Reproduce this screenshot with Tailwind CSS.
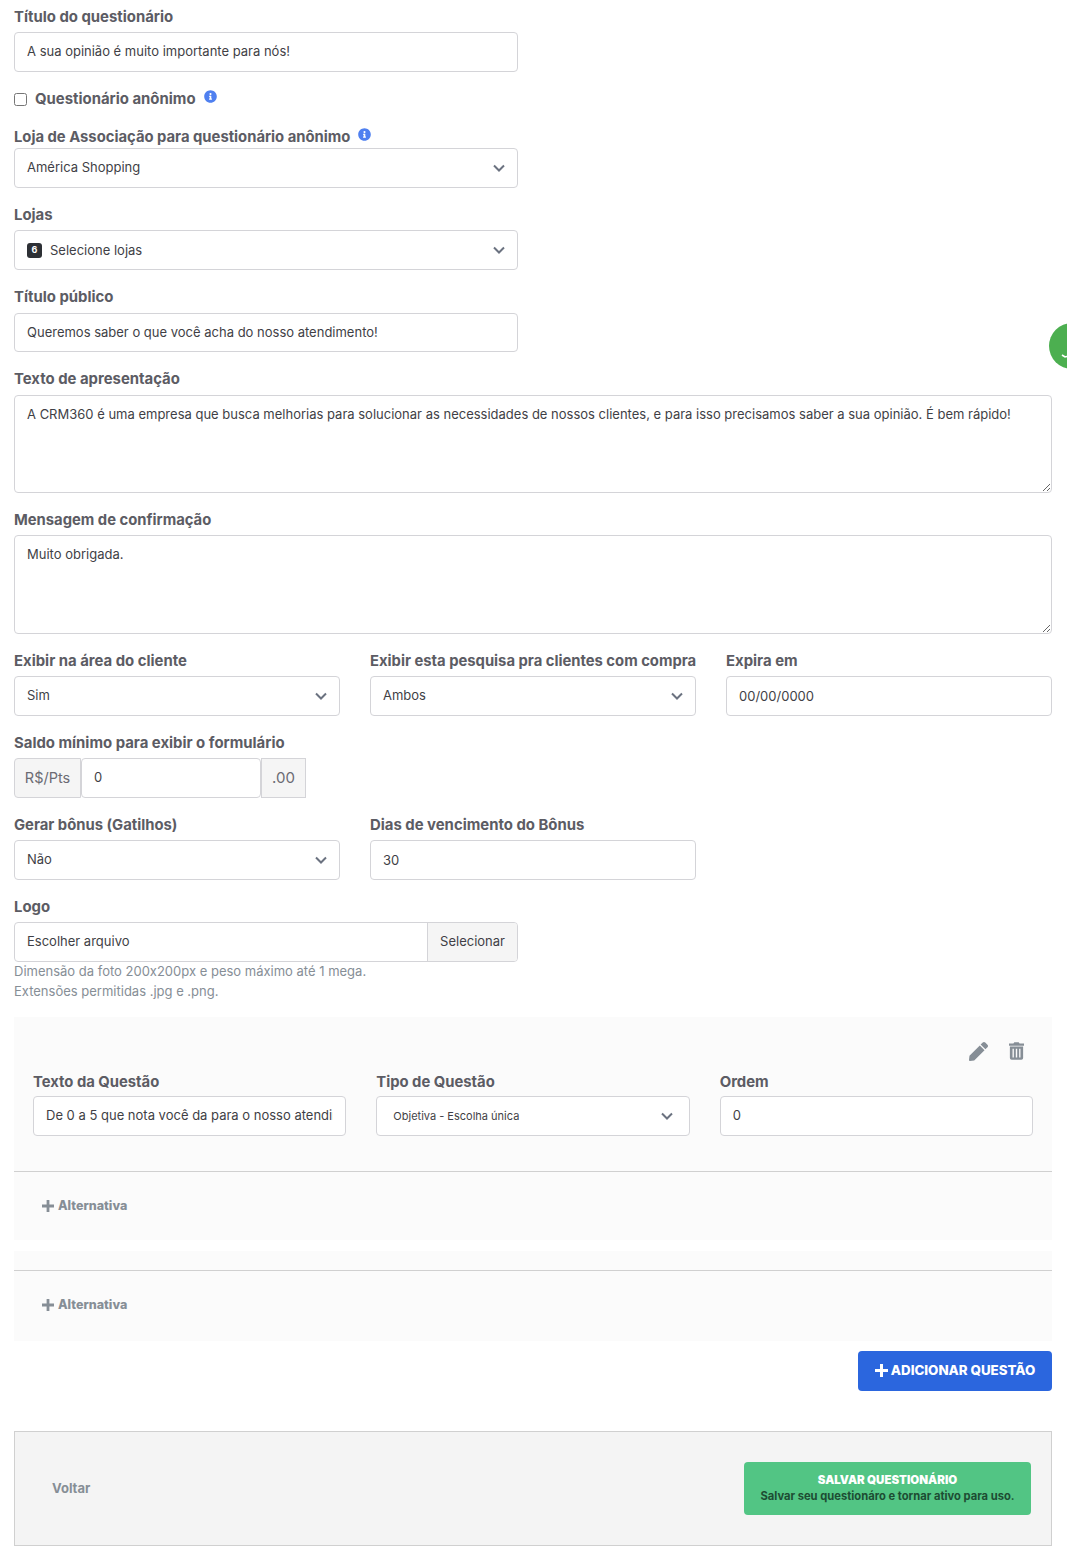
<!DOCTYPE html>
<html lang="pt-BR">
<head>
  <meta charset="utf-8" />
  <title>Questionário</title>
  <script src="https://cdn.jsdelivr.net/npm/@tailwindcss/browser@4"></script>
</head>
<body class="bg-white font-['Inter',sans-serif] text-[13px] text-[#3f3f46] overflow-x-hidden [font-variant-ligatures:none] [font-feature-settings:'calt'_0]">
  <!-- floating whatsapp bubble, cut off by the window -->
  <div class="fixed left-[1049px] top-[323px] w-[46px] h-[46px] rounded-full bg-[#4caf50] overflow-hidden">
    <svg class="absolute left-[12px] top-[26px]" width="12" height="10" viewBox="0 0 12 10" fill="none" stroke="#fff" stroke-width="1.6"><path d="M1 6l3 2 4-1" /></svg>
  </div>

  <form class="w-[1038px] ml-[14px] pt-[5px] h-[1557px]">
    <label class="block h-6 leading-6 mb-[3px] text-[14.9px] font-bold text-[#5c5c64]">Título do questionário</label>
    <input value="A sua opinião é muito importante para nós!" class="block w-[504px] h-10 px-3 pb-[2px] border border-[#d4d4d8] rounded" />

    <div class="flex items-center h-6 pt-[2px] mt-[14px]">
      <input type="checkbox" class="w-[13px] h-[13px]" />
      <span class="ml-2 text-[14.9px] font-bold text-[#5c5c64]">Questionário anônimo</span>
      <svg class="ml-2 mb-[6px]" width="13" height="13" viewBox="0 0 512 512" fill="#4f80f0"><path d="M256 8C119 8 8 119 8 256s111 248 248 248 248-111 248-248S393 8 256 8zm0 110a42 42 0 1 1 0 84 42 42 0 0 1 0-84zm56 254c0 7-5 12-12 12h-88c-7 0-12-5-12-12v-24c0-7 5-12 12-12h12v-64h-12c-7 0-12-5-12-12v-24c0-7 5-12 12-12h64c7 0 12 5 12 12v100h12c7 0 12 5 12 12v24z"/></svg>
    </div>

    <div class="flex items-center h-6 pt-[2px] mt-[14px]">
      <label class="text-[14.8px] font-bold text-[#5c5c64]">Loja de Associação para questionário anônimo</label>
      <svg class="ml-2 mb-[6px]" width="13" height="13" viewBox="0 0 512 512" fill="#4f80f0"><path d="M256 8C119 8 8 119 8 256s111 248 248 248 248-111 248-248S393 8 256 8zm0 110a42 42 0 1 1 0 84 42 42 0 0 1 0-84zm56 254c0 7-5 12-12 12h-88c-7 0-12-5-12-12v-24c0-7 5-12 12-12h12v-64h-12c-7 0-12-5-12-12v-24c0-7 5-12 12-12h64c7 0 12 5 12 12v100h12c7 0 12 5 12 12v24z"/></svg>
    </div>
    <div class="flex items-center justify-between w-[504px] h-10 pl-3 pr-[11px] border border-[#d4d4d8] rounded">
      <span class="mb-px">América Shopping</span>
      <svg width="14" height="14" viewBox="0 0 14 14" fill="none" stroke="#6b7280" stroke-width="2"><path d="M2 4.500l5 5 5-5"/></svg>
    </div>

    <label class="block h-6 leading-6 mt-[15px] mb-[3px] text-[14.9px] font-bold text-[#5c5c64]">Lojas</label>
    <div class="flex items-center justify-between w-[504px] h-10 pl-3 pr-[11px] border border-[#d4d4d8] rounded">
      <span class="flex items-center gap-2">
        <span class="w-[15px] h-[15px] rounded-[3px] bg-[#2d3035] text-white text-[9px] font-bold flex items-center justify-center">6</span>
        <span class="mt-px">Selecione lojas</span>
      </span>
      <svg width="14" height="14" viewBox="0 0 14 14" fill="none" stroke="#6b7280" stroke-width="2"><path d="M2 4.500l5 5 5-5"/></svg>
    </div>

    <label class="block h-6 leading-6 mt-[15px] mb-1 text-[14.9px] font-bold text-[#5c5c64]">Título público</label>
    <input value="Queremos saber o que você acha do nosso atendimento!" class="block w-[504px] h-[39px] px-3 pb-[2px] border border-[#d4d4d8] rounded" />

    <label class="block h-6 leading-6 mt-[15px] mb-1 text-[14.9px] font-bold text-[#5c5c64]">Texto de apresentação</label>
    <textarea class="block w-full h-[98px] px-3 py-[9px] border border-[#d4d4d8] rounded">A CRM360 é uma empresa que busca melhorias para solucionar as necessidades de nossos clientes, e para isso precisamos saber a sua opinião. É bem rápido!</textarea>

    <label class="block h-6 leading-6 mt-[15px] mb-[3px] text-[14.8px] font-bold text-[#5c5c64]">Mensagem de confirmação</label>
    <textarea class="block w-full h-[99px] px-3 py-[9px] border border-[#d4d4d8] rounded">Muito obrigada.</textarea>

    <div class="grid grid-cols-3 gap-x-[30px] mt-[15px]">
      <div>
        <label class="block h-6 leading-6 mb-[3px] text-[14.9px] font-bold text-[#5c5c64]">Exibir na área do cliente</label>
        <div class="flex items-center justify-between h-10 pl-3 pr-[11px] border border-[#d4d4d8] rounded">
          <span>Sim</span>
          <svg width="14" height="14" viewBox="0 0 14 14" fill="none" stroke="#6b7280" stroke-width="2"><path d="M2 4.500l5 5 5-5"/></svg>
        </div>
      </div>
      <div>
        <label class="block h-6 leading-6 mb-[3px] text-[14.8px] font-bold text-[#5c5c64] whitespace-nowrap">Exibir esta pesquisa pra clientes com compra</label>
        <div class="flex items-center justify-between h-10 pl-3 pr-[11px] border border-[#d4d4d8] rounded">
          <span>Ambos</span>
          <svg width="14" height="14" viewBox="0 0 14 14" fill="none" stroke="#6b7280" stroke-width="2"><path d="M2 4.500l5 5 5-5"/></svg>
        </div>
      </div>
      <div>
        <label class="block h-6 leading-6 mb-[3px] text-[14.9px] font-bold text-[#5c5c64]">Expira em</label>
        <input value="00/00/0000" class="block w-full h-10 px-3 border border-[#d4d4d8] rounded" />
      </div>
    </div>

    <label class="block h-6 leading-6 mt-[15px] mb-[3px] text-[14.9px] font-bold text-[#5c5c64]">Saldo mínimo para exibir o formulário</label>
    <div class="flex h-10 w-[292px]">
      <span class="flex items-center justify-center w-[67px] bg-[#f5f5f5] border border-[#d4d4d8] rounded-l text-[14.5px] text-[#6b6b73]">R$/Pts</span>
      <input value="0" class="w-[180px] px-3 border border-[#d4d4d8] rounded" />
      <span class="flex items-center justify-center w-[45px] bg-[#f5f5f5] border border-[#d4d4d8] text-[15px] text-[#6b6b73]">.00</span>
    </div>

    <div class="grid grid-cols-3 gap-x-[30px] mt-[15px]">
      <div>
        <label class="block h-6 leading-6 mb-[3px] text-[14.8px] font-bold text-[#5c5c64]">Gerar bônus (Gatilhos)</label>
        <div class="flex items-center justify-between h-10 pl-3 pr-[11px] border border-[#d4d4d8] rounded">
          <span>Não</span>
          <svg width="14" height="14" viewBox="0 0 14 14" fill="none" stroke="#6b7280" stroke-width="2"><path d="M2 4.500l5 5 5-5"/></svg>
        </div>
      </div>
      <div>
        <label class="block h-6 leading-6 mb-[3px] text-[14.9px] font-bold text-[#5c5c64]">Dias de vencimento do Bônus</label>
        <input value="30" class="block w-full h-10 px-3 border border-[#d4d4d8] rounded" />
      </div>
    </div>

    <label class="block h-6 leading-6 mt-[15px] mb-[3px] text-[14.9px] font-bold text-[#5c5c64]">Logo</label>
    <div class="flex w-[504px] h-10 border border-[#d4d4d8] rounded overflow-hidden">
      <span class="flex-1 flex items-center px-3">Escolher arquivo</span>
      <span class="flex items-center px-3 bg-[#f5f5f5] border-l border-[#d4d4d8]">Selecionar</span>
    </div>
    <p class="mt-[-1px] leading-5 text-[#868e96]">Dimensão da foto 200x200px e peso máximo até 1 mega.</p>
    <p class="leading-5 text-[#868e96]">Extensões permitidas .jpg e .png.</p>

    <!-- question card -->
    <section class="mt-[16px] h-[223px] bg-[#fbfbfb]">
      <div class="flex justify-end items-center gap-[21px] h-[55px] pr-[28px] pt-[13px]">
        <svg width="19" height="19" viewBox="0 0 512 512" fill="#868e96"><path d="M290.700 93.200l128 128-278 278-114.100 12.600c-15.300 1.700-28.200-11.200-26.500-26.500l12.700-114.200 277.900-277.900zm207.200-19.100l-60.100-60.100c-18.700-18.700-49.100-18.700-67.900 0l-56.500 56.500 128 128 56.500-56.500c18.800-18.800 18.800-49.200 0-67.900z"/></svg>
        <svg width="15" height="18" viewBox="0 0 17 20" fill="#868e96"><path d="M6 0h5l1 1.500h5V4H0V1.500h5zM1 5h15v13a2 2 0 0 1-2 2H3a2 2 0 0 1-2-2zm3 2.500v10h1.500v-10zm3.700 0v10h1.600v-10zm3.800 0v10H13v-10z"/></svg>
      </div>
      <div class="grid grid-cols-3 gap-x-[30px] px-[19px]">
        <div>
          <label class="block h-6 leading-[26px] mb-[3px] text-[14.8px] font-bold text-[#5c5c64] -mt-[3px]">Texto da Questão</label>
          <input value="De 0 a 5 que nota você da para o nosso atendimento?" class="block w-full h-10 px-3 pb-[2px] bg-white border border-[#d4d4d8] rounded" />
        </div>
        <div>
          <label class="block h-6 leading-[26px] mb-[3px] text-[14.8px] font-bold text-[#5c5c64] -mt-[3px]">Tipo de Questão</label>
          <div class="flex items-center justify-between h-10 pl-4 pr-[15px] bg-white border border-[#d4d4d8] rounded text-[11px]">
            <span>Objetiva - Escolha única</span>
            <svg width="14" height="14" viewBox="0 0 14 14" fill="none" stroke="#6b7280" stroke-width="2"><path d="M2 4.500l5 5 5-5"/></svg>
          </div>
        </div>
        <div>
          <label class="block h-6 leading-[26px] mb-[3px] text-[14.9px] font-bold text-[#5c5c64] -mt-[3px]">Ordem</label>
          <input value="0" class="block w-full h-10 px-3 pb-[2px] bg-white border border-[#d4d4d8] rounded" />
        </div>
      </div>
      <div class="mt-[35px] border-t border-[#d0d0d0] pl-[28px] pt-[25px] flex items-center gap-[4px] text-[12.5px] text-[#868e96] font-extrabold">
        <svg class="mb-px" width="12" height="12" viewBox="0 0 13 13" fill="#868e96"><path d="M5 0h3v5h5v3H8v5H5V8H0V5h5z"/></svg>
        Alternativa
      </div>
    </section>

    <section class="mt-[11px] h-[90px] bg-[#fbfbfb] pt-[19px]">
      <div class="border-t border-[#d0d0d0] pl-[28px] pt-[25px] flex items-center gap-[4px] text-[12.5px] text-[#868e96] font-extrabold">
        <svg class="mb-px" width="12" height="12" viewBox="0 0 13 13" fill="#868e96"><path d="M5 0h3v5h5v3H8v5H5V8H0V5h5z"/></svg>
        Alternativa
      </div>
    </section>

    <div class="flex justify-end mt-[10px]">
      <button type="button" class="flex items-center justify-center gap-[3px] w-[194px] h-10 rounded bg-[#2b66de] text-white text-[13.3px] font-extrabold">
        <svg class="mb-px" width="13" height="13" viewBox="0 0 13 13" fill="#fff"><path d="M5 0h3v5h5v3H8v5H5V8H0V5h5z"/></svg>
        ADICIONAR QUESTÃO
      </button>
    </div>

    <footer class="flex items-center justify-between mt-[40px] h-[115px] pl-[37px] pr-5 bg-[#f4f4f4] border border-[#d0d0d0]">
      <a class="text-[#868e96] font-bold">Voltar</a>
      <button type="button" class="w-[287px] h-[53px] pb-[2px] rounded bg-[#52c584] font-bold">
        <span class="block text-[11.5px] leading-4 font-black text-white">SALVAR QUESTIONÁRIO</span>
        <span class="block text-[11.2px] leading-4 text-[#1d4d33]">Salvar seu questionáro e tornar ativo para uso.</span>
      </button>
    </footer>
  </form>
</body>
</html>
